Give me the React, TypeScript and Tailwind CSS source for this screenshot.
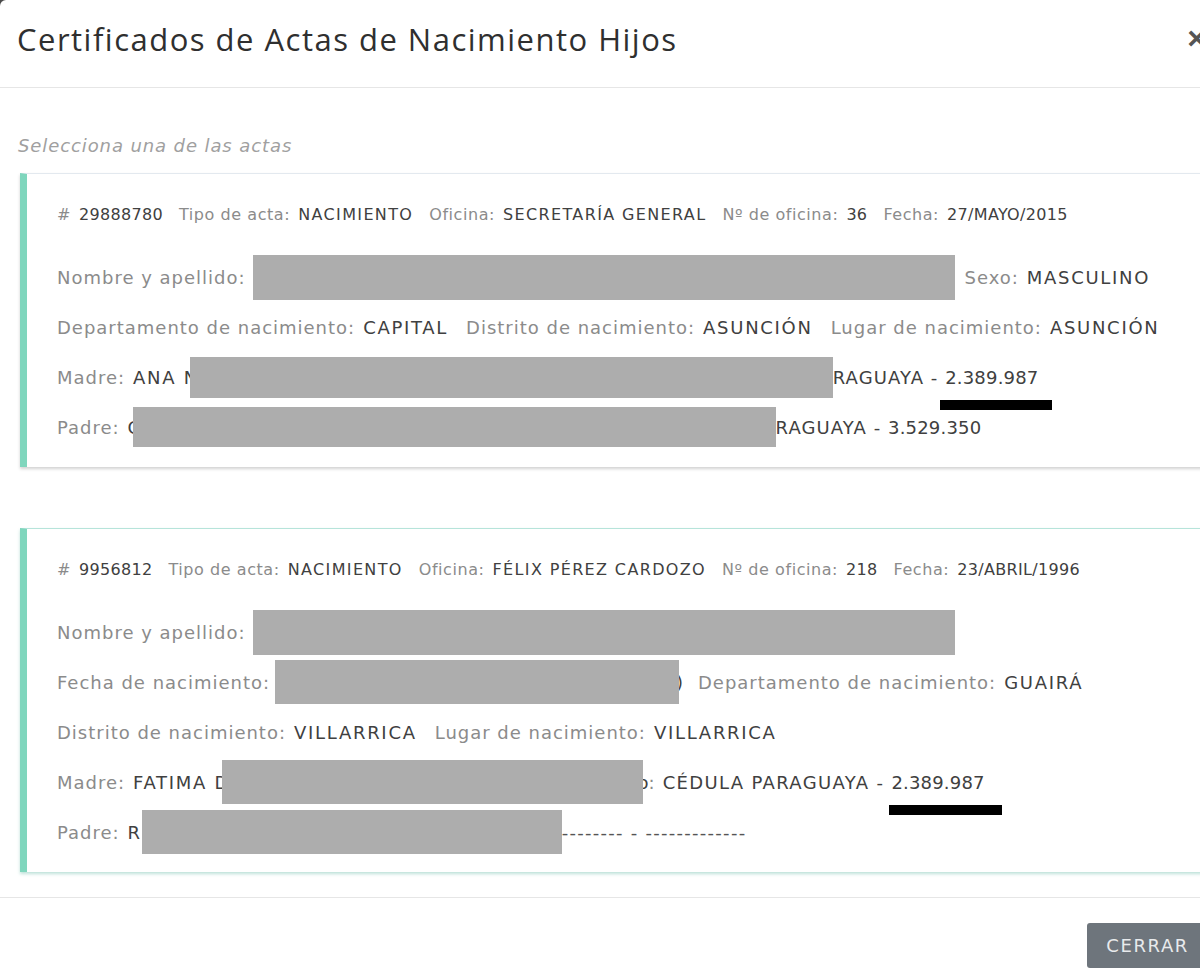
import React from "react";

const body = "font-['DejaVu_Sans',sans-serif]";

function Label({ children, first, s }: { children: React.ReactNode; first?: boolean; s?: boolean }) {
  return (
    <span
      className={`${first ? "" : s ? "ml-4" : "ml-[18px]"} text-[#8b8b8b] ${
        s ? "tracking-[0.035em]" : "tracking-[0.055em]"
      }`}
    >
      {children}
    </span>
  );
}

function Value({ children, num, s }: { children: React.ReactNode; num?: boolean; s?: boolean }) {
  return (
    <span
      className={`ml-2 text-[#404040] ${
        num ? "tracking-[0.02em]" : s ? "tracking-[0.085em]" : "tracking-[0.095em]"
      }`}
    >
      {children}
    </span>
  );
}

function Box({ w, h }: { w: number; h: number }) {
  return <span className="block shrink-0 bg-[#adadad]" style={{ width: w, height: h }} />;
}

function Clip({ w, right, children }: { w: number; right?: boolean; children: React.ReactNode }) {
  return (
    <span
      className={`inline-flex overflow-hidden text-[#404040] ${right ? "justify-end" : "justify-start"}`}
      style={{ width: w }}
    >
      <span className="shrink-0">{children}</span>
    </span>
  );
}

function Marked({ children, left, width }: { children: React.ReactNode; left: number; width: number }) {
  return (
    <span className="relative tracking-[0.01em]">
      {children}
      <span className="absolute top-[33px] h-[10px] bg-black" style={{ left, width }} />
    </span>
  );
}

function Row({ children, small }: { children: React.ReactNode; small?: boolean }) {
  return (
    <div
      className={`flex items-center whitespace-nowrap ${
        small ? "h-6 text-[16px] mb-[25px]" : "h-[50px] text-[18px]"
      }`}
    >
      {children}
    </div>
  );
}

function Card({ children, active }: { children: React.ReactNode; active?: boolean }) {
  return (
    <div
      className={`border-l-[7px] border-l-[#7fd6bd] border-t ${
        active
          ? "border-t-[#b6e4da] shadow-[0_2px_3px_rgba(110,190,170,0.45)]"
          : "border-t-[#e3e9ef] shadow-[0_2px_3px_rgba(0,0,0,0.18)]"
      } bg-white pl-[30px] pt-[29px] pb-[15px]`}
    >
      {children}
    </div>
  );
}

export default function App() {
  return (
    <div className="w-[1200px] h-[977px] overflow-hidden bg-[#4a4a4a]">
      <div className={`w-[1228px] h-[977px] bg-white rounded-tl-[6px] ${body}`}>
        <div className="relative h-[88px] border-b border-[#e6e6e6] flex items-center pl-[17px]">
          <h1 className="font-['Open_Sans',sans-serif] text-[31px] tracking-[0.048em] text-[#2f2f2f] -mt-[8px]">
            Certificados de Actas de Nacimiento Hijos
          </h1>
          <span className="absolute right-[22px] top-[14px] text-[32px] font-bold text-[#555] font-['Liberation_Sans',sans-serif]">
            ×
          </span>
        </div>

        <div className="px-[20px] pt-[46px]">
          <p className="italic text-[18px] text-[#a0a0a0] tracking-[0.05em] -ml-[2px] h-6 leading-6 mb-[15px]">
            Selecciona una de las actas
          </p>

          <Card>
            <Row small>
              <Label first s>#</Label>
              <Value num>29888780</Value>
              <Label s>Tipo de acta:</Label>
              <Value s>NACIMIENTO</Value>
              <Label s>Oficina:</Label>
              <Value s>SECRETARÍA GENERAL</Value>
              <Label s>Nº de oficina:</Label>
              <Value num>36</Value>
              <Label s>Fecha:</Label>
              <Value num>27/MAYO/2015</Value>
            </Row>
            <Row>
              <Label first>Nombre y apellido:</Label>
              <span className="ml-2" />
              <Box w={702} h={45} />
              <Label>
                <span className="-ml-[9px]">Sexo:</span>
              </Label>
              <Value>MASCULINO</Value>
            </Row>
            <Row>
              <Label first>Departamento de nacimiento:</Label>
              <Value>CAPITAL</Value>
              <Label>Distrito de nacimiento:</Label>
              <Value>ASUNCIÓN</Value>
              <Label>Lugar de nacimiento:</Label>
              <Value>ASUNCIÓN</Value>
            </Row>
            <Row>
              <Label first>Madre:</Label>
              <Value>ANA&nbsp;</Value>
              <Clip w={6}>N</Clip>
              <Box w={643} h={41} />
              <span className="text-[#404040] tracking-[0.06em]">
                RAGUAYA - <Marked left={-5} width={112}>2.389.987</Marked>
              </span>
            </Row>
            <Row>
              <Label first>Padre:</Label>
              <span className="ml-2" />
              <Clip w={5}>C</Clip>
              <Box w={643} h={40} />
              <span className="text-[#404040] tracking-[0.06em]">
                RAGUAYA - <span className="tracking-[0.01em]">3.529.350</span>
              </span>
            </Row>
          </Card>

          <div className="h-[61px]" />

          <Card active>
            <Row small>
              <Label first s>#</Label>
              <Value num>9956812</Value>
              <Label s>Tipo de acta:</Label>
              <Value s>NACIMIENTO</Value>
              <Label s>Oficina:</Label>
              <Value s>FÉLIX PÉREZ CARDOZO</Value>
              <Label s>Nº de oficina:</Label>
              <Value num>218</Value>
              <Label s>Fecha:</Label>
              <Value num>23/ABRIL/1996</Value>
            </Row>
            <Row>
              <Label first>Nombre y apellido:</Label>
              <span className="ml-2" />
              <Box w={702} h={45} />
            </Row>
            <Row>
              <Label first>Fecha de nacimiento:</Label>
              <span className="ml-[5px]" />
              <Box w={404} h={44} />
              <Clip w={4} right>)</Clip>
              <Label>
                <span className="-ml-[3px]">Departamento de nacimiento:</span>
              </Label>
              <Value>GUAIRÁ</Value>
            </Row>
            <Row>
              <Label first>Distrito de nacimiento:</Label>
              <Value>VILLARRICA</Value>
              <Label>Lugar de nacimiento:</Label>
              <Value>VILLARRICA</Value>
            </Row>
            <Row>
              <Label first>Madre:</Label>
              <Value>FATIMA&nbsp;</Value>
              <Clip w={7}>D</Clip>
              <Box w={421} h={44} />
              <Clip w={6} right>o</Clip>
              <span className="text-[#8b8b8b]">:</span>
              <span className="ml-2 text-[#404040] tracking-[0.075em]">
                CÉDULA PARAGUAYA - <Marked left={-2} width={113}>2.389.987</Marked>
              </span>
            </Row>
            <Row>
              <Label first>Padre:</Label>
              <Value>R</Value>
              <Box w={420} h={44} />
              <span className="text-[#555] tracking-[0.07em]">-------- - -------------</span>
            </Row>
          </Card>
        </div>

        <div className="mt-[25px] border-t border-[#e6e6e6] pt-[25px] flex justify-end pr-[20px]">
          <button className="h-[45px] px-[19px] bg-[#6e757c] text-[#e8eaec] text-[18px] tracking-[0.09em] rounded-[3px]">
            CERRAR
          </button>
        </div>
      </div>
    </div>
  );
}
